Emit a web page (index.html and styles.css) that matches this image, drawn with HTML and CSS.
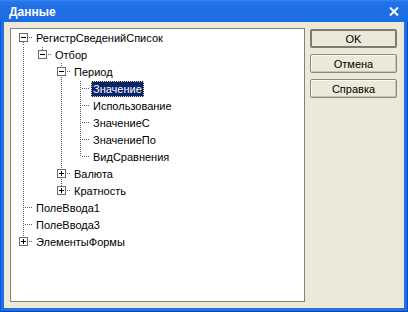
FILE: index.html
```html
<!DOCTYPE html>
<html lang="ru">
<head>
    <meta charset="UTF-8">
    <title>Данные</title>
    <link rel="stylesheet" href="styles.css">
</head>
<body>
    <div class="window">
        <div class="titlebar">
            <span class="title">Данные</span>
            <span class="close">
                <svg width="10" height="9" viewBox="0 0 10 9">
                    <path d="M1 0.5 L9 8.5 M9 0.5 L1 8.5" stroke="#fff" stroke-width="2" fill="none"/>
                </svg>
            </span>
        </div>
        <div class="content">
            <div class="tree">
                <div class="row"><span class="g f"><i class="box minus"></i></span><span class="label">РегистрСведенийСписок</span></div>
                <div class="row"><span class="g v"></span><span class="g l"><i class="box minus"></i></span><span class="label">Отбор</span></div>
                <div class="row"><span class="g v"></span><span class="g"></span><span class="g t"><i class="box minus"></i></span><span class="label">Период</span></div>
                <div class="row"><span class="g v"></span><span class="g"></span><span class="g v"></span><span class="g t"></span><span class="label selected">Значение</span></div>
                <div class="row"><span class="g v"></span><span class="g"></span><span class="g v"></span><span class="g t"></span><span class="label">Использование</span></div>
                <div class="row"><span class="g v"></span><span class="g"></span><span class="g v"></span><span class="g t"></span><span class="label">ЗначениеС</span></div>
                <div class="row"><span class="g v"></span><span class="g"></span><span class="g v"></span><span class="g t"></span><span class="label">ЗначениеПо</span></div>
                <div class="row"><span class="g v"></span><span class="g"></span><span class="g v"></span><span class="g l"></span><span class="label">ВидСравнения</span></div>
                <div class="row"><span class="g v"></span><span class="g"></span><span class="g t"><i class="box plus"></i></span><span class="label">Валюта</span></div>
                <div class="row"><span class="g v"></span><span class="g"></span><span class="g l"><i class="box plus"></i></span><span class="label">Кратность</span></div>
                <div class="row"><span class="g t"></span><span class="label">ПолеВвода1</span></div>
                <div class="row"><span class="g t"></span><span class="label">ПолеВвода3</span></div>
                <div class="row"><span class="g l"><i class="box plus"></i></span><span class="label">ЭлементыФормы</span></div>
            </div>
            <div class="buttons">
                <button class="btn default">OK</button>
                <button class="btn">Отмена</button>
                <button class="btn">Справка</button>
            </div>
        </div>
    </div>
</body>
</html>
```

FILE: styles.css
```css
body {
    margin: 0;
    font-family: "Liberation Sans", Arial, sans-serif;
    font-size: 11px;
    color: #000;
}
.window {
    width: 408px;
    height: 312px;
    box-sizing: border-box;
    padding: 0 4px 4px;
    background: #1f6fe6;
    box-shadow: inset 1px 0 #0b55d6, inset -1px 0 #0b4fc8, inset 0 -1px #0a3fae;
    display: flex;
    flex-direction: column;
}
.titlebar {
    height: 22px;
    margin: 0 -4px;
    padding: 0 9px;
    display: flex;
    align-items: center;
    justify-content: space-between;
    background: linear-gradient(#3b86f0 0, #2474ea 2px, #1f6fe6 6px, #1c6be2 100%);
}
.title {
    color: #fff;
    font-weight: bold;
    font-size: 12px;
    padding-top: 2px;
}
.close {
    display: flex;
    padding-top: 1px;
}
.content {
    flex: 1;
    background: #ece9d8;
    padding: 6px 7px 6px 6px;
    display: flex;
    gap: 5px;
}
.tree {
    width: 295px;
    box-sizing: border-box;
    background: #fff;
    border: 1px solid #85827a;
    padding-left: 3px;
}
.row {
    height: 17px;
    display: flex;
    align-items: center;
    --d1: #5e5e5e;
    --d2: transparent;
}
.row:nth-child(even) {
    --d1: transparent;
    --d2: #5e5e5e;
}
.g {
    width: 19px;
    height: 17px;
    flex: none;
    display: flex;
    align-items: center;
    background-repeat: no-repeat;
}
.g.v {
    background-image: repeating-linear-gradient(var(--d1) 0 1px, var(--d2) 1px 2px);
    background-position: 9px 0;
    background-size: 1px 17px;
}
.g.t {
    background-image: repeating-linear-gradient(var(--d1) 0 1px, var(--d2) 1px 2px),
        repeating-linear-gradient(to right, #5e5e5e 0 1px, transparent 1px 2px);
    background-position: 9px 0, 11px 8px;
    background-size: 1px 17px, 8px 1px;
}
.g.l {
    background-image: repeating-linear-gradient(var(--d1) 0 1px, var(--d2) 1px 2px),
        repeating-linear-gradient(to right, #5e5e5e 0 1px, transparent 1px 2px);
    background-position: 9px 0, 11px 8px;
    background-size: 1px 8px, 8px 1px;
}
.g.f {
    background-image: repeating-linear-gradient(var(--d1) 0 1px, var(--d2) 1px 2px),
        repeating-linear-gradient(to right, #5e5e5e 0 1px, transparent 1px 2px);
    background-position: 9px 9px, 11px 8px;
    background-size: 1px 8px, 8px 1px;
}
.box {
    width: 9px;
    height: 9px;
    box-sizing: border-box;
    margin-left: 5px;
    border: 1px solid #6b6b6b;
    background: #fff;
}
.box.minus {
    background: linear-gradient(#000, #000) 1px 3px / 5px 1px no-repeat, #fff;
}
.box.plus {
    background: linear-gradient(#000, #000) 1px 3px / 5px 1px no-repeat,
        linear-gradient(#000, #000) 3px 1px / 1px 5px no-repeat, #fff;
}
.label {
    margin-left: 1px;
    padding: 0 1px;
    line-height: 14px;
    border: 1px solid transparent;
    white-space: nowrap;
}
.label.selected {
    background: #0a246a;
    color: #fff;
    border: 1px dotted #f5db95;
}
.buttons {
    width: 87px;
    padding-top: 1px;
    display: flex;
    flex-direction: column;
    gap: 6px;
}
.btn {
    height: 19px;
    padding: 0;
    font-family: "Liberation Sans", Arial, sans-serif;
    font-size: 11px;
    color: #000;
    background: #ece9d8;
    border: 1px solid #8a877c;
    border-radius: 2px;
    box-shadow: inset 1px 1px #fbfaf5, inset -1px -1px #c9c5b4;
}
.btn.default {
    border: 2px solid #7d7a70;
    box-shadow: none;
}
```
